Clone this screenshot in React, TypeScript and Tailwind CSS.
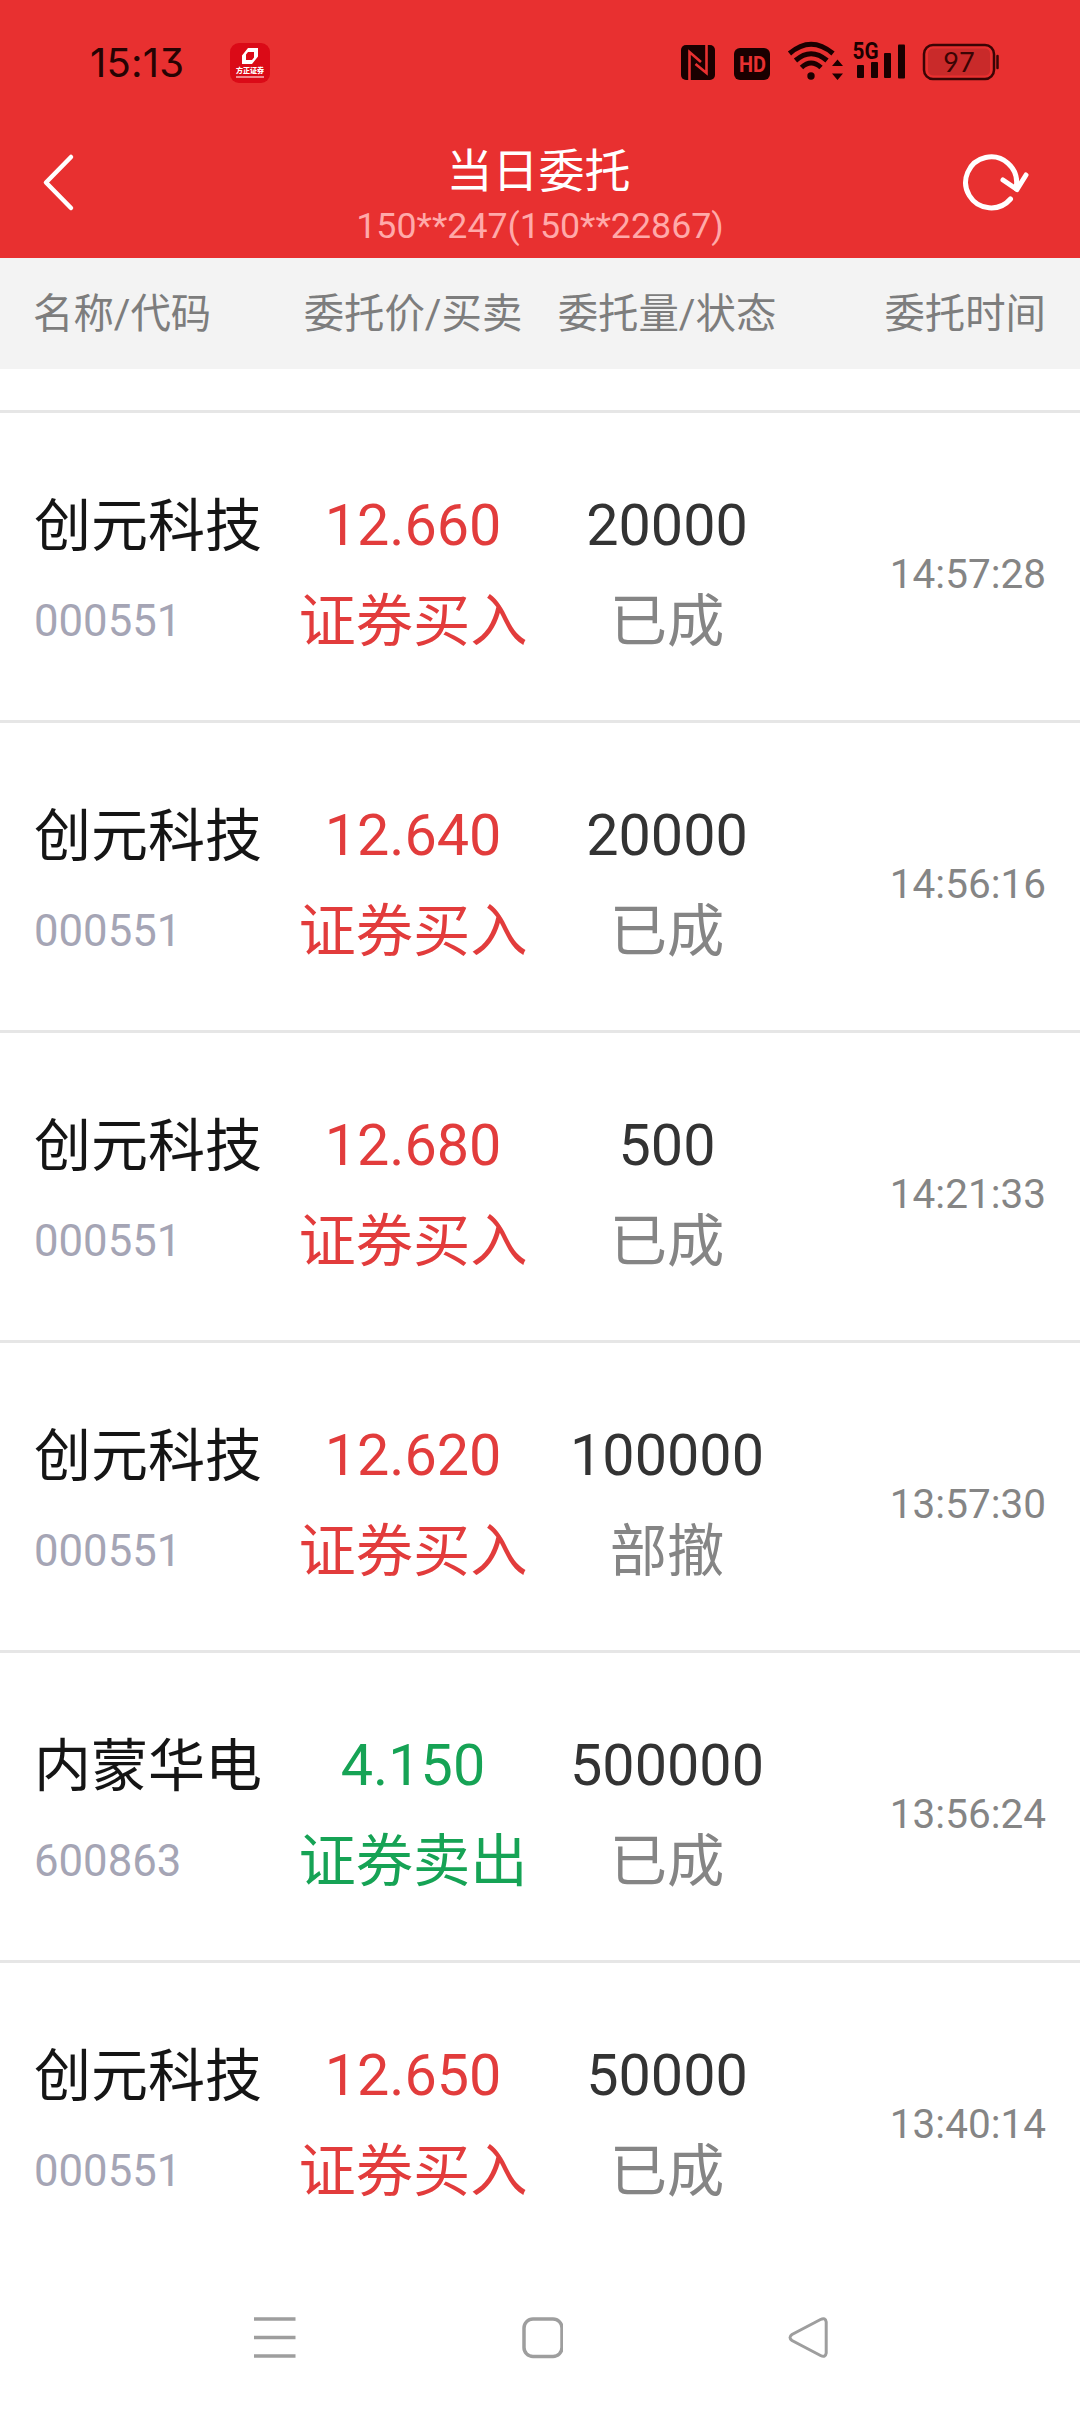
import React from "react";

type Order = {
  name: string;
  code: string;
  price: string;
  side: "buy" | "sell";
  qty: string;
  status: string;
  time: string;
};

const orders: Order[] = [
  { name: "创元科技", code: "000551", price: "12.660", side: "buy", qty: "20000", status: "已成", time: "14:57:28" },
  { name: "创元科技", code: "000551", price: "12.640", side: "buy", qty: "20000", status: "已成", time: "14:56:16" },
  { name: "创元科技", code: "000551", price: "12.680", side: "buy", qty: "500", status: "已成", time: "14:21:33" },
  { name: "创元科技", code: "000551", price: "12.620", side: "buy", qty: "100000", status: "部撤", time: "13:57:30" },
  { name: "内蒙华电", code: "600863", price: "4.150", side: "sell", qty: "500000", status: "已成", time: "13:56:24" },
  { name: "创元科技", code: "000551", price: "12.650", side: "buy", qty: "50000", status: "已成", time: "13:40:14" },
];

function AppBadge() {
  return (
    <div className="flex h-10 w-10 flex-col items-center rounded-[9px] bg-[#db0a17] pt-[5px]">
      <svg width="16" height="16" viewBox="0 0 16 16">
        <path fill="#fff" fillRule="evenodd" d="M6 0H16V8.500L10 16H0V7.500ZM6 4L4 6.500V12H10L12 9.500V4Z" />
      </svg>
      <div className="mt-[3px] whitespace-nowrap text-[7px] leading-[8px] font-black text-white">方正证券</div>
      <div className="mt-px h-[2px] w-7 bg-[#f08a90]" />
    </div>
  );
}

function StatusIcons() {
  return (
    <svg width="345" height="50" viewBox="0 0 345 50" className="block shrink-0">
      {/* NFC */}
      <rect x="6" y="9" width="34" height="35" rx="5" fill="#1a0000" />
      <path d="M14.500 44V16L26 26" fill="none" stroke="#e83030" strokeWidth="2.600" />
      <path d="M31.500 9V37L20.500 28" fill="none" stroke="#e83030" strokeWidth="2.600" />
      {/* HD */}
      <rect x="59" y="12" width="36" height="32" rx="6" fill="#1a0000" />
      <text x="77.500" y="36" textAnchor="middle" textLength="27" lengthAdjust="spacingAndGlyphs" fontSize="22" fontWeight="700" fontFamily="Roboto" fill="#e83030">HD</text>
      {/* Wi-Fi */}
      <g fill="none" stroke="#1a0000" strokeWidth="5">
        <path d="M114.500 17.500Q136 -1 158 17.500" />
        <path d="M120.500 24.500Q136 11 152 24.500" />
        <path d="M126.500 31.500Q136 22.500 146 31.500" />
      </g>
      <circle cx="136" cy="40" r="3.700" fill="#1a0000" />
      <path d="M157 30L162.500 23.500L168 30ZM157 37.500H168L162.500 44Z" fill="#1a0000" />
      {/* Cellular */}
      <text x="177.500" y="23" textLength="26" lengthAdjust="spacingAndGlyphs" fontSize="23.500" fontWeight="700" fontFamily="Roboto" fill="#1a0000">5G</text>
      <g fill="#1a0000">
        <rect x="182" y="29" width="7" height="13" rx="1" />
        <rect x="196" y="26" width="7" height="16" rx="1" />
        <rect x="209" y="17" width="7" height="25" rx="1" />
        <rect x="223" y="8.500" width="7" height="34" rx="1" />
      </g>
      {/* Battery */}
      <rect x="249" y="9" width="70" height="34" rx="9" fill="none" stroke="#3a0404" strokeWidth="2.500" />
      <rect x="253" y="12.500" width="62" height="27" rx="5" fill="#c92a2a" />
      <path d="M322.500 20V32" fill="none" stroke="#3a0404" strokeWidth="2.500" strokeLinecap="round" />
      <text x="284" y="36" textAnchor="middle" fontSize="27" fontFamily="Lato" fill="#3a0404">97</text>
    </svg>
  );
}

function StatusBar() {
  return (
    <div className="flex h-[125px] items-start pt-9 pl-[90px]">
      <div className="flex w-[585px] shrink-0 items-center pt-[7px]">
        <div className="w-[140px] whitespace-nowrap font-[Inter] text-[40px] leading-10 tracking-[0.200px] text-[#260303] [font-feature-settings:'cv09']">15:13</div>
        <AppBadge />
      </div>
      <StatusIcons />
    </div>
  );
}

function TitleBar() {
  return (
    <div className="flex h-[133px] items-start justify-between">
      <svg width="120" height="133" viewBox="0 0 120 133" className="block">
        <path d="M71 32L46 57.500L71 83" fill="none" stroke="#fff" strokeWidth="4.500" strokeLinecap="round" strokeLinejoin="round" />
      </svg>
      <div className="flex flex-col items-center pt-[18px] text-center">
        <div className="pr-[3px] text-[46px] leading-[56px] text-white">当日委托</div>
        <div className="mt-[7px] text-[35.750px] leading-10 text-[#ffa9a9]">150**247(150**22867)</div>
      </div>
      <svg width="120" height="133" viewBox="0 0 120 133" className="block">
        <g fill="none" stroke="#fff" strokeWidth="5" strokeLinecap="round" strokeLinejoin="round">
          <path d="M50.500 74A25.500 25.500 0 1 1 56.500 60L56.500 64" />
          <path d="M43 55L57 64.500L66 50" />
        </g>
      </svg>
    </div>
  );
}

function OrderRow({ order }: { order: Order }) {
  const tone = order.side === "buy" ? "text-[#e23c3c]" : "text-[#16a355]";
  return (
    <div className="grid h-[310px] grid-cols-[286px_254px_254px_1fr] border-t-[3px] border-[#e6e6e6] pt-[65px] text-[57.500px] leading-[95px]">
      <div className="pl-[34px]">
        <div className="whitespace-nowrap text-[57px] leading-[97px] text-[#151515]">{order.name}</div>
        <div className="text-[43.700px] leading-[93px] text-[#a5a5b5]">{order.code}</div>
      </div>
      <div className={`text-center whitespace-nowrap ${tone}`}>
        <div>{order.price}</div>
        <div className="text-[57.300px] leading-[97px]">{order.side === "buy" ? "证券买入" : "证券卖出"}</div>
      </div>
      <div className="text-center whitespace-nowrap">
        <div className="text-[#333]">{order.qty}</div>
        <div className="text-[57.300px] leading-[97px] text-[#858585]">{order.status}</div>
      </div>
      <div className="pr-[34px] text-right text-[40.500px] leading-[193px] text-[#858585]">{order.time}</div>
    </div>
  );
}

function NavBar() {
  return (
    <div className="flex h-[149px] items-start justify-between bg-white px-[252px] pt-[50px]">
      <svg width="45" height="48" viewBox="0 0 45 48">
        <path d="M2 6H43.500M2 24.500H43.500M2 43H43.500" stroke="#9e9e9e" strokeWidth="3.500" />
      </svg>
      <svg width="45" height="48" viewBox="0 0 45 48">
        <rect x="6" y="6" width="38" height="37.500" rx="9" fill="none" stroke="#9e9e9e" strokeWidth="3.500" />
      </svg>
      <svg width="45" height="48" viewBox="0 0 45 48">
        <path d="M37.500 6.500L9 21.500Q5 24.500 9 27.500L37.500 42.500Q42.500 45 43.200 40V9Q42.500 4 37.500 6.500Z" fill="none" stroke="#9e9e9e" strokeWidth="3" />
      </svg>
    </div>
  );
}

export default function App() {
  return (
    <div className="flex h-[2412px] w-[1080px] flex-col overflow-hidden bg-white font-[Roboto,'Noto_Sans_CJK_SC',sans-serif]">
      <header className="h-[258px] shrink-0 bg-[#e83030]">
        <StatusBar />
        <TitleBar />
      </header>
      <div className="grid h-[111px] shrink-0 grid-cols-[286px_254px_254px_1fr] bg-[#f3f3f3] text-[40.400px] leading-[113px] whitespace-nowrap text-[#7d7d7d]">
        <div className="pl-[33px]">名称/代码</div>
        <div className="text-center">委托价/买卖</div>
        <div className="text-center">委托量/状态</div>
        <div className="pr-[34px] text-right">委托时间</div>
      </div>
      <main className="h-[1894px] shrink-0 overflow-hidden pt-[41px]">
        {orders.map((order) => (
          <OrderRow key={order.time} order={order} />
        ))}
      </main>
      <NavBar />
    </div>
  );
}
